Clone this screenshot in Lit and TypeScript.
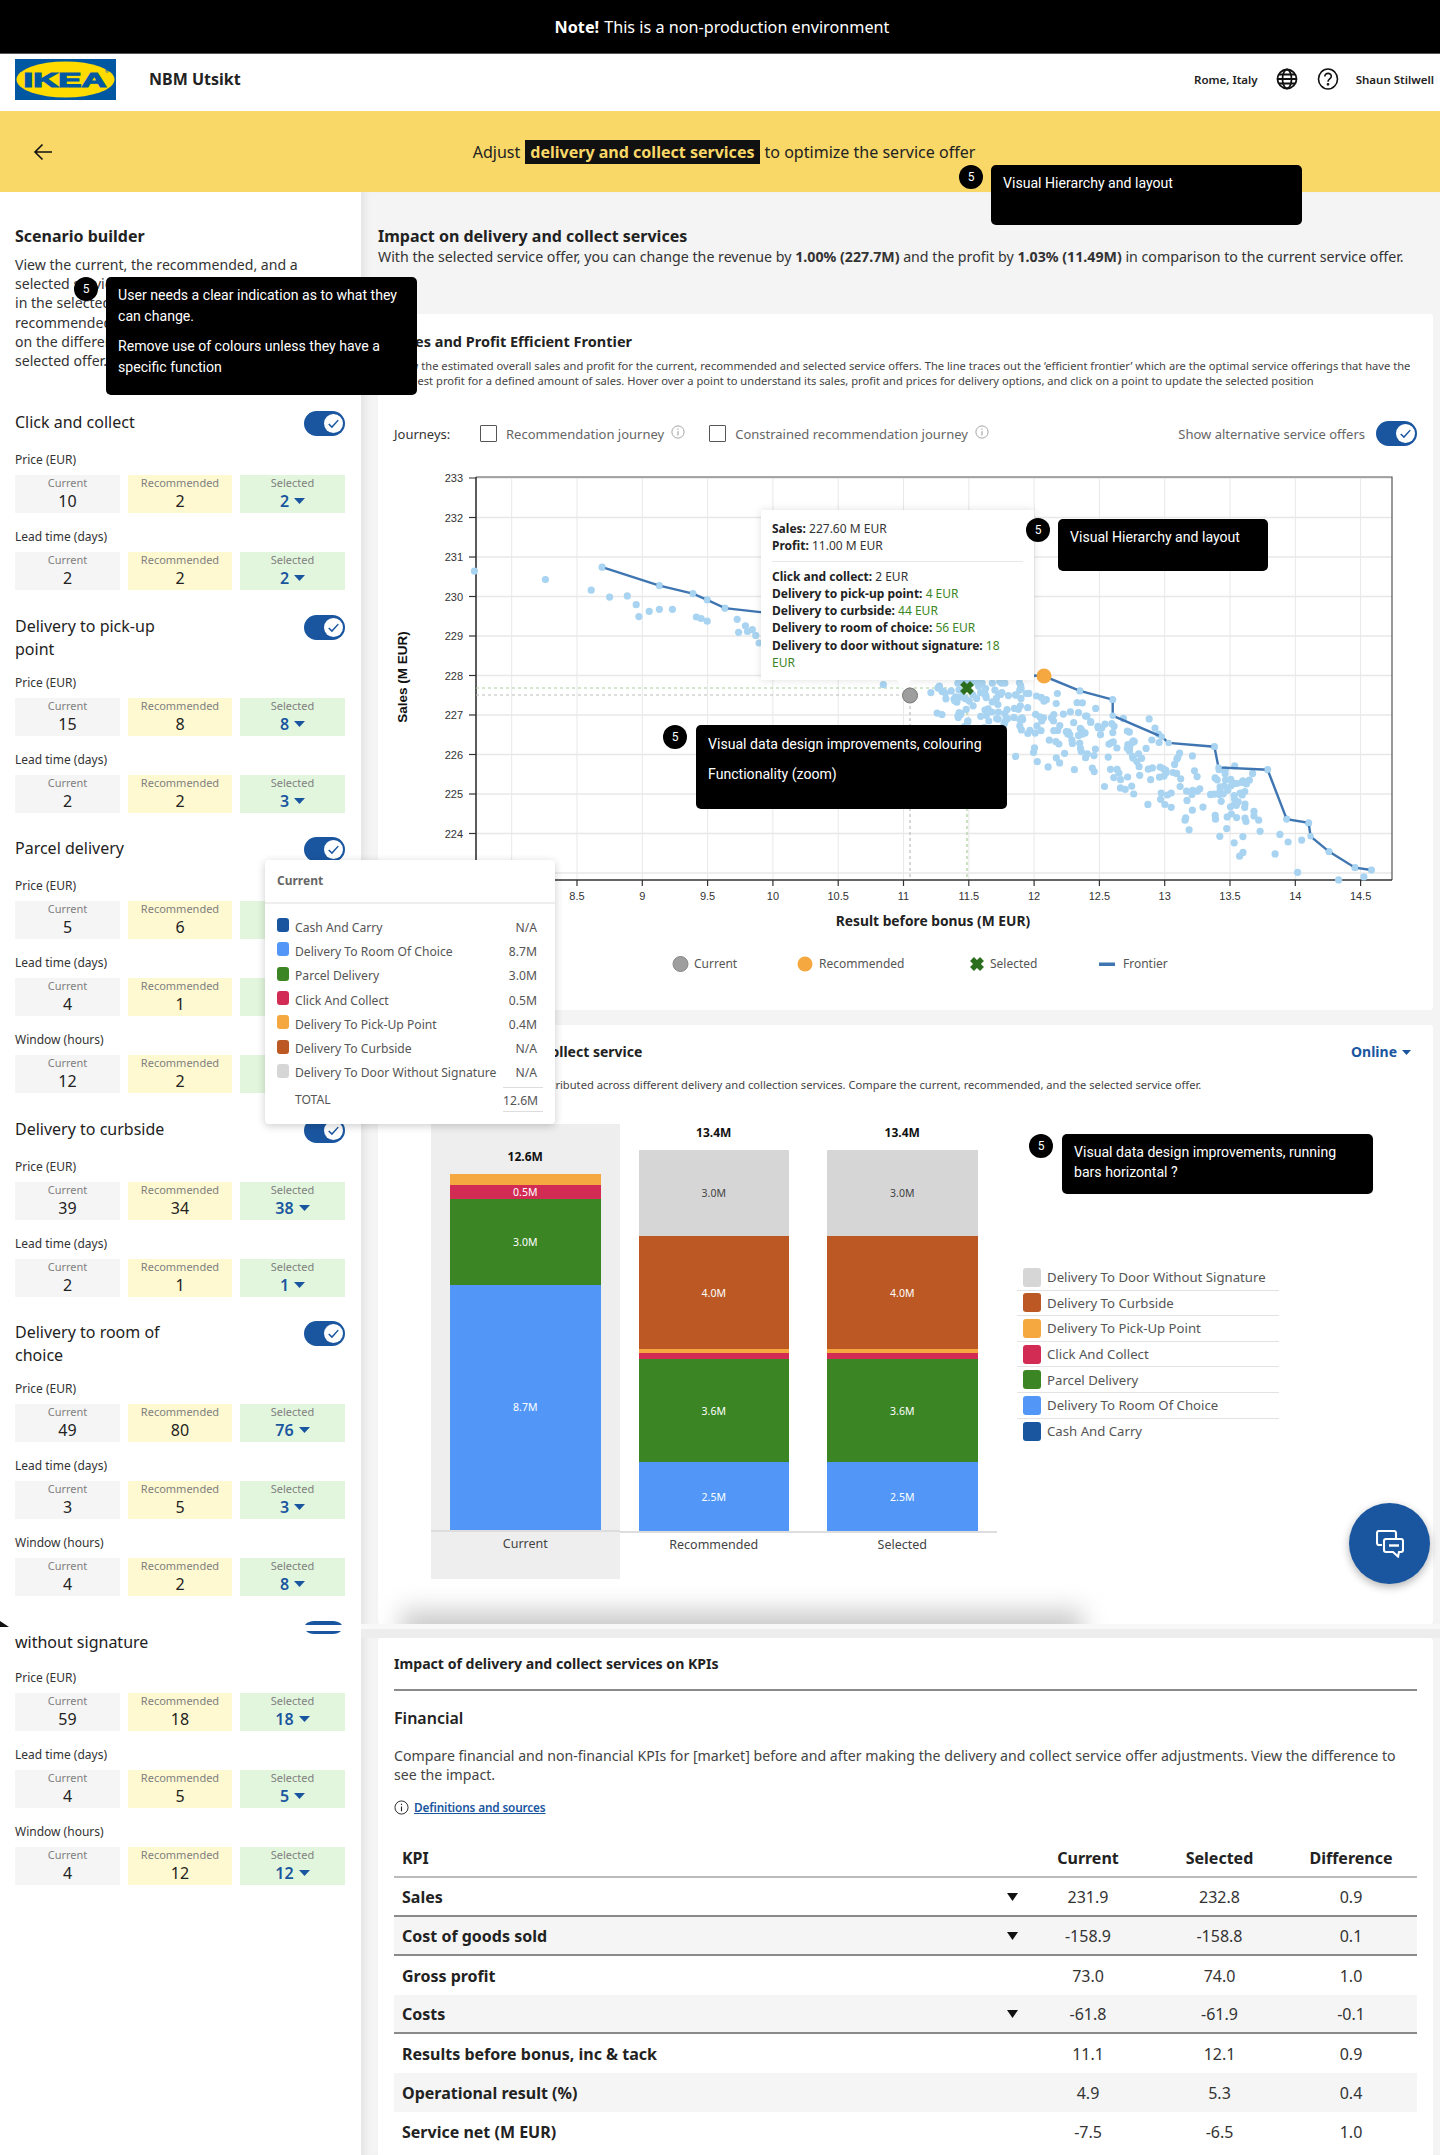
import { LitElement, html, svg, css } from "lit";
import { customElement } from "lit/decorators.js";

const cx = (x: number) => 370 + x / 1.465;
const cy = (y: number) => 400 + y / 2.613;

const FRONTIER: [number, number][] = [
  [340, 437], [424, 485], [473, 506], [494, 522], [520, 544], [575, 555], [700, 640], [800, 700], [988, 722], [1040, 760], [1088, 783],
  [1088, 825], [1160, 880], [1170, 896], [1237, 906], [1243, 960], [1315, 966], [1343, 1095], [1375, 1105], [1378, 1140], [1405, 1180], [1443, 1222], [1467, 1228],
];
const FIXED: [number, number][] = [
  [153, 447], [257, 469], [324, 497], [351, 515], [377, 512], [390, 535], [394, 566], [409, 552], [424, 547], [443, 547], [478, 567], [485, 571], [494, 578],
  [538, 573], [540, 607], [550, 590], [553, 605], [560, 600], [565, 615], [570, 635], [752, 744], [340, 437], [424, 485], [473, 506], [494, 522], [520, 544],
  [1443, 1222], [1467, 1228], [1456, 1246], [1419, 1254], [1359, 1234], [1326, 1186], [1274, 1192], [1279, 1182], [1266, 1157], [1200, 1123], [1195, 1092],
  [1032, 966], [1076, 1010], [972, 921], [831, 818], [838, 822], [1088, 783], [1237, 906], [1315, 966], [1343, 1095], [1375, 1105], [1405, 1180], [1040, 760],
  [1245, 1140], [1255, 1120], [1304, 1127], [1333, 1135], [1345, 1155], [1365, 1150], [1302, 1098], [1295, 1075],
];
function scatter(): [number, number][] {
  let s = 12345;
  const r = () => ((s = (s * 16807) % 2147483647) / 2147483647);
  const out: [number, number][] = [...FIXED];
  for (let i = 0; i < 250; i++) {
    const x = 860 + r() * 440;
    const spread = (r() + r() - 1) * 125;
    const y = 775 + (x - 860) * 0.62 + spread;
    out.push([x, Math.max(740, y)]);
  }
  for (let i = 0; i < 40; i++) out.push([800 + r() * 170, 735 + r() * 55]);
  return out;
}
const DOTS = scatter();

type Group = [string, number, number, number];
const GROUPS: { title: string; rows: Group[] }[] = [
  { title: "Click and collect", rows: [["Price (EUR)", 10, 2, 2], ["Lead time (days)", 2, 2, 2]] },
  { title: "Delivery to pick-up point", rows: [["Price (EUR)", 15, 8, 8], ["Lead time (days)", 2, 2, 3]] },
  { title: "Parcel delivery", rows: [["Price (EUR)", 5, 6, 6], ["Lead time (days)", 4, 1, 1], ["Window (hours)", 12, 2, 2]] },
  { title: "Delivery to curbside", rows: [["Price (EUR)", 39, 34, 38], ["Lead time (days)", 2, 1, 1]] },
  { title: "Delivery to room of choice", rows: [["Price (EUR)", 49, 80, 76], ["Lead time (days)", 3, 5, 3], ["Window (hours)", 4, 2, 8]] },
];
const LAST: Group[] = [["Price (EUR)", 59, 18, 18], ["Lead time (days)", 4, 5, 5], ["Window (hours)", 4, 12, 12]];

const C = { door: "#D6D6D6", curb: "#BC5823", pick: "#F5A83F", click: "#D22C55", parcel: "#3B8524", room: "#5297F7", cash: "#1A56A0" };
const BARS = [
  { total: "12.6M", name: "Current", hi: true, segs: [[C.pick, 11, ""], [C.click, 14, "0.5M"], [C.parcel, 85.5, "3.0M"], [C.room, 245.5, "8.7M"]] },
  { total: "13.4M", name: "Recommended", hi: false, segs: [[C.door, 86, "3.0M"], [C.curb, 113, "4.0M"], [C.pick, 3.5, ""], [C.click, 6.5, ""], [C.parcel, 103, "3.6M"], [C.room, 69, "2.5M"]] },
  { total: "13.4M", name: "Selected", hi: false, segs: [[C.door, 86, "3.0M"], [C.curb, 113, "4.0M"], [C.pick, 3.5, ""], [C.click, 6.5, ""], [C.parcel, 103, "3.6M"], [C.room, 69, "2.5M"]] },
] as { total: string; name: string; hi: boolean; segs: [string, number, string][] }[];

const POP = [
  [C.cash, "Cash And Carry", "N/A"], [C.room, "Delivery To Room Of Choice", "8.7M"], [C.parcel, "Parcel Delivery", "3.0M"], [C.click, "Click And Collect", "0.5M"],
  [C.pick, "Delivery To Pick-Up Point", "0.4M"], [C.curb, "Delivery To Curbside", "N/A"], [C.door, "Delivery To Door Without Signature", "N/A"],
];
const LEG = [
  [C.door, "Delivery To Door Without Signature"], [C.curb, "Delivery To Curbside"], [C.pick, "Delivery To Pick-Up Point"], [C.click, "Click And Collect"],
  [C.parcel, "Parcel Delivery"], [C.room, "Delivery To Room Of Choice"], [C.cash, "Cash And Carry"],
];
const KPI: [string, boolean, string, string, string, string][] = [
  ["Sales", true, "231.9", "232.8", "0.9", "hard"],
  ["Cost of goods sold", true, "-158.9", "-158.8", "0.1", "alt hard"],
  ["Gross profit", false, "73.0", "74.0", "1.0", ""],
  ["Costs", true, "-61.8", "-61.9", "-0.1", "alt hard"],
  ["Results before bonus, inc & tack", false, "11.1", "12.1", "0.9", ""],
  ["Operational result (%)", false, "4.9", "5.3", "0.4", "alt"],
  ["Service net (M EUR)", false, "-7.5", "-6.5", "1.0", ""],
];

const X_TICKS = [8.5, 9, 9.5, 10, 10.5, 11, 11.5, 12, 12.5, 13, 13.5, 14, 14.5];
const Y_TICKS = [233, 232, 231, 230, 229, 228, 227, 226, 225, 224];
const xp = (v: number) => 577 + (v - 8.5) * 130.6;
const yp = (v: number) => 478 + (233 - v) * 39.5;

const info = html`<svg class="info" viewBox="0 0 16 16"><circle cx="8" cy="8" r="7" fill="none" stroke="currentColor" stroke-width="1"/><path d="M8 7v5M8 4v1.4" stroke="currentColor" stroke-width="1.2" fill="none"/></svg>`;
const caret = html`<svg class="caret" viewBox="0 0 11 6"><path d="M0 0h11L5.500 6z" fill="#1A56A0"/></svg>`;
const toggle = html`<span class="toggle"><span class="knob"><svg viewBox="0 0 18 18"><path d="M4.500 9.400l3 3 6-6.600" fill="none" stroke="#1A56A0" stroke-width="1.4"/></svg></span></span>`;
const xMark = (x: number, y: number, c: string) => svg`<path transform="translate(${x} ${y})" stroke="${c}" stroke-width="5.5" fill="none" d="M-5-5L5 5M5-5L-5 5"/>`;

@customElement("app-root")
export class AppRoot extends LitElement {
  static styles = css`
    :host { display: block; position: relative; width: 1440px; height: 2155px; overflow: hidden; background: #fff; font-family: "Noto Sans", sans-serif; color: #111; }
    .note { height: 54px; background: #000; color: #fff; border-bottom: 1px solid #555; box-sizing: border-box; display: flex; align-items: center; justify-content: center; font-size: 16.2px; padding-left: 4px; }
    .note b { font-weight: 700; margin-right: 5px; }
    header { height: 57px; box-sizing: border-box; display: flex; align-items: center; padding: 0 6px 7px 15px; font-size: 11.5px; font-weight: 600; color: #222; }
    .logo { width: 101px; height: 41px; }
    .app { font-size: 16px; font-weight: 700; margin-left: 33px; flex: 1; }
    .hicon { width: 22px; height: 22px; margin-left: 18px; }
    .hicon.q { margin-left: 19px; }
    .user { margin-left: 17px; }
    .banner { height: 81px; background: #F9D867; position: relative; display: flex; align-items: center; justify-content: center; font-size: 16.05px; padding-left: 8px; color: #222; }
    .banner svg { position: absolute; left: 33px; top: 31px; width: 20px; height: 20px; }
    .banner mark { background: #111; color: #F9D867; font-weight: 700; padding: 1px 5px; margin: 0 5px; }
    .body { display: grid; grid-template-columns: 361px minmax(0, 1fr); }
    aside { padding: 33px 16px 0 15px; height: 1963px; box-sizing: border-box; }
    h2 { margin: 0; font-size: 16px; font-weight: 700; line-height: 22px; color: #222; }
    .intro { margin: 8px 0 41px; font-size: 14.1px; line-height: 19.2px; color: #333; white-space: nowrap; }
    section { margin-bottom: 24.25px; }
    .head { display: flex; justify-content: space-between; align-items: flex-start; min-height: 27px; margin-bottom: 14.25px; }
    .head span.t { max-width: 170px; font-size: 16px; line-height: 23px; color: #222; }
    .toggle { width: 41px; height: 25px; border-radius: 13px; background: #1A56A0; position: relative; display: block; flex: none; }
    .knob { position: absolute; right: 2px; top: 3px; width: 19px; height: 19px; border-radius: 50%; background: #fff; }
    .knob svg { display: block; width: 19px; height: 19px; }
    .lab { font-size: 12px; line-height: 16px; margin-bottom: 7px; color: #333; }
    .boxes { display: grid; grid-template-columns: 105px 104.5px 105px; column-gap: 7.75px; margin-bottom: 16px; }
    .rows .boxes:last-child { margin-bottom: 0; }
    .box { height: 38px; text-align: center; background: #F5F5F5; }
    .box.r { background: #FFF9D1; }
    .box.s { background: #E2F6DD; }
    .box small { display: block; font-size: 11px; line-height: 16px; color: #808080; }
    .box strong { display: flex; align-items: center; justify-content: center; gap: 5px; font-size: 16px; line-height: 20px; font-weight: 400; color: #222; }
    .box.s strong { color: #1A56A0; font-weight: 600; }
    .caret { width: 11px; height: 6px; }
    .stitch { height: 13px; margin-top: 3px; position: relative; }
    .sliver { position: absolute; right: 3px; top: 0; width: 37px; height: 13px; }
    .blob { position: absolute; left: -15px; top: 0; width: 9px; height: 6px; }
    .lastt { font-size: 16px; line-height: 23px; height: 23px; margin-bottom: 16px; color: #222; margin-top: -3px; }
    main { background: #F4F4F4; padding: 33px 7px 0 17px; box-shadow: inset 8px 0 6px -4px #e4e4e4; height: 1963px; box-sizing: border-box; min-width: 0; }
    .sub { margin: 0 0 47px; font-size: 14.2px; line-height: 20px; color: #333; white-space: nowrap; }
    .sub b { font-weight: 700; }
    .card { background: #fff; border-radius: 3px; padding: 17px 16px 0; box-sizing: border-box; position: relative; overflow: hidden; }
    .c1 { height: 696px; margin-bottom: 15px; }
    .c2 { height: 599px; }
    .c3 { height: 560px; padding-top: 16px; }
    h3 { margin: 0; font-size: 14px; font-weight: 700; line-height: 20px; color: #222; }
    .c1 h3 { font-size: 14.5px; }
    .c3 h3 { font-size: 14.1px; }
    .desc { margin: 7px 0 0; font-size: 11.15px; line-height: 15px; color: #444; white-space: nowrap; }
    .jr { display: flex; align-items: center; height: 25px; margin: 33px 0 3.5px; font-size: 13px; color: #666; }
    .jr .first { color: #333; width: 86px; }
    .cb { width: 17px; height: 17px; border: 1.5px solid #555; box-sizing: border-box; border-radius: 1px; margin-right: 9px; }
    .info { width: 14px; height: 14px; margin: -4px 0 0 7px; color: #999; }
    .jr .gap { width: 24px; }
    .jr .push { flex: 1; }
    .jr .toggle { margin: 0 0 0 11px; }
    .chart { display: block; margin-left: -16px; }
    .chart text { font-family: "Liberation Sans", sans-serif; }
    .chart text.n { font-family: "Noto Sans", sans-serif; }
    .c2head { display: flex; justify-content: space-between; padding-right: 2px; }
    .online { color: #1A56A0; font-weight: 700; font-size: 14px; line-height: 20px; display: flex; align-items: center; gap: 5px; margin-right: 4px; }
    .online .caret { width: 9px; height: 5px; }
    .d2 { margin-top: 14px; line-height: 18px; }
    .barwrap { display: flex; margin: 30px 0 0 37px; }
    .cols { display: flex; height: 455px; width: 566px; flex: none; }
    .col { width: 188.5px; display: flex; flex-direction: column; justify-content: flex-end; align-items: stretch; }
    .col.hi { background: #EEEEEE; }
    .tot { text-align: center; font-size: 12px; font-weight: 700; line-height: 18px; margin-bottom: 8px; color: #111; }
    .stack { margin: 0 19px 0 19px; }
    .seg { display: flex; align-items: center; justify-content: center; font-size: 10.5px; color: #fff; }
    .seg.dk { color: #444; }
    .ax { height: 49px; border-top: 2px solid #DDD; box-sizing: border-box; text-align: center; font-size: 12.5px; line-height: 24px; color: #444; }
    .legend { margin: 141px 0 0 20px; width: 262px; }
    .legend div { height: 25.6px; box-sizing: border-box; display: flex; align-items: center; gap: 6px; padding-left: 6px; font-size: 13.2px; color: #555; border-bottom: 1.5px solid #E3E3E3; }
    .legend div:last-child { border-bottom: 0; }
    .legend i { width: 18px; height: 19px; border-radius: 3px; }
    .blur { position: absolute; left: 23px; top: 585px; width: 682px; height: 40px; background: #ccc; filter: blur(12px); }
    .seam { height: 14px; background: #EDEDED; border-top: 5px solid #F8F8F8; box-sizing: border-box; margin-left: -17px; margin-right: -7px; }
    .rule { border: 0; border-top: 2px solid #8a8a8a; margin: 15px 0 16px; }
    .fin { font-size: 16px; font-weight: 600; line-height: 22px; color: #222; }
    .p3 { margin: 17px 0 0; font-size: 14.15px; line-height: 19.2px; color: #444; }
    .link { display: flex; align-items: center; margin-top: 14px; font-size: 11.8px; font-weight: 600; color: #1A56A0; height: 18px; letter-spacing: -.15px; }
    .link u { margin-left: 5px; }
    .link .info { margin: 1px 0 0 0; color: #222; width: 15px; height: 15px; }
    .tbl { margin-top: 23px; }
    .tr { display: grid; grid-template-columns: 605px 15px 132px 131px 132px; padding-left: 8px; align-items: center; text-align: center; height: 39px; box-sizing: border-box; font-size: 16px; color: #333; }
    .tr.th { height: 39px; font-weight: 700; border-bottom: 2px solid #bbb; color: #222; }
    .tr.alt { background: #F5F5F5; }
    .tr.hard { border-bottom: 2px solid #8a8a8a; }
    .tr > :first-child { text-align: left; font-weight: 700; color: #222; }
    .ar { width: 11px; height: 8px; display: block; }

    .note5 { position: absolute; background: #000; color: #fff; border-radius: 5px; font-family: Roboto, sans-serif; font-size: 14.1px; box-sizing: border-box; padding-left: 12px; z-index: 5; }
    .note5 p { margin: 0; }
    .dot { position: absolute; width: 24px; height: 24px; border-radius: 50%; background: #000; color: #fff; font-size: 12px; font-family: Roboto, sans-serif; display: flex; align-items: center; justify-content: center; z-index: 6; }
    .n1 { left: 106px; top: 277px; width: 311px; height: 118px; padding-top: 8px; line-height: 20.5px; }
    .n1 p + p { margin-top: 10px; }
    .d1 { left: 74px; top: 277px; }
    .n2 { left: 991px; top: 165px; width: 311px; height: 60px; padding-top: 8px; line-height: 20px; }
    .d2b { left: 959px; top: 165px; }
    .n3 { left: 1058px; top: 519px; width: 210px; height: 52px; padding-top: 8px; line-height: 20px; }
    .d3 { left: 1026px; top: 518px; }
    .n4 { left: 696px; top: 725px; width: 311px; height: 84px; padding-top: 9px; line-height: 20px; }
    .n4 p + p { margin-top: 10px; }
    .d4 { left: 663px; top: 725px; }
    .n5 { left: 1062px; top: 1134px; width: 311px; height: 60px; padding-top: 8px; line-height: 20px; }
    .d5 { left: 1029px; top: 1134px; }

    .tip { position: absolute; left: 761px; top: 510px; width: 273px; height: 170px; box-sizing: border-box; background: #fff; padding: 10px 11px; font-size: 12px; line-height: 17.3px; color: #333; box-shadow: 0 0 8px rgba(0,0,0,.12); z-index: 3; }
    .tip b { font-weight: 700; color: #222; }
    .tip hr { border: 0; border-top: 1.5px solid #e8e8e8; margin: 6px 0 6px; }
    .tip em { font-style: normal; color: #3B8524; }
    .tip::after { content: ""; position: absolute; left: 136px; bottom: -10px; border: 7px solid transparent; border-top-color: #fff; border-bottom: 0; border-top-width: 10px; }
    .pop { position: absolute; left: 265px; top: 860px; width: 290px; height: 264px; box-sizing: border-box; background: #fff; border-radius: 4px; box-shadow: 0 2px 8px rgba(0,0,0,.2); z-index: 4; font-size: 12.15px; color: #555; }
    .pop h4 { margin: 0; height: 42px; line-height: 42px; padding-left: 12px; font-size: 12px; font-weight: 700; color: #666; border-bottom: 2px solid #eee; box-sizing: content-box; }
    .pop .list { padding: 11px 18px 0 12px; }
    .pop .row { display: flex; align-items: center; height: 24.3px; }
    .pop .row i { width: 12px; height: 14px; border-radius: 3px; margin-right: 6px; margin-top: -4px; }
    .pop .row span { flex: 1; }
    .pop .tot2 { display: flex; justify-content: space-between; height: 25px; line-height: 25px; padding-left: 18px; margin-top: 2px; position: relative; }
    .pop .tot2 span:last-child { border-top: 1px solid #ddd; border-bottom: 1px solid #ddd; text-align: right; margin-right: -6px; padding-right: 6px; box-sizing: content-box; width: 34px; }
    .fab { position: absolute; left: 1349px; top: 1503px; width: 81px; height: 81px; border-radius: 50%; background: #1A56A0; box-shadow: 0 3px 8px rgba(0,0,0,.3); display: flex; align-items: center; justify-content: center; z-index: 6; }
    .fab svg { width: 28px; height: 28px; }
  `;

  private boxes(rows: Group[]) {
    return html`<div class="rows">${rows.map(
      ([l, a, b, c]) => html`<div class="lab">${l}</div>
        <div class="boxes">
          <div class="box"><small>Current</small><strong>${a}</strong></div>
          <div class="box r"><small>Recommended</small><strong>${b}</strong></div>
          <div class="box s"><small>Selected</small><strong>${c}${caret}</strong></div>
        </div>`
    )}</div>`;
  }

  private chart() {
    const line = FRONTIER.map(([x, y]) => `${cx(x).toFixed(1)},${cy(y).toFixed(1)}`).join(" ");
    return html`<svg class="chart" width="1055" height="540" viewBox="378 450 1055 540">
      ${[8, ...X_TICKS].map((v) => svg`<line x1=${xp(v)} x2=${xp(v)} y1="478" y2="880" stroke="#E8E8E8" stroke-width="1"/>`)}
      ${[...Y_TICKS, 223].map((v) => svg`<line x1="476" x2="1392" y1=${yp(v)} y2=${yp(v)} stroke="#E8E8E8" stroke-width="1.5"/>`)}
      <path d="M476 477H1392V880" fill="none" stroke="#555" stroke-width="1.2"/>
      <path d="M476 477V880H1392" fill="none" stroke="#333" stroke-width="1.6"/>
      ${Y_TICKS.map((v) => svg`<line x1="469" x2="476" y1=${yp(v)} y2=${yp(v)} stroke="#333" stroke-width="1.2"/><text x="463" y=${yp(v) + 4} text-anchor="end" font-size="11" fill="#333">${v}</text>`)}
      ${X_TICKS.map((v) => svg`<line x1=${xp(v)} x2=${xp(v)} y1="880" y2="886" stroke="#333" stroke-width="1.2"/><text x=${xp(v)} y="900" text-anchor="middle" font-size="11" fill="#333">${v}</text>`)}
      <text transform="translate(407 677) rotate(-90)" text-anchor="middle" font-size="13.5" font-weight="700" fill="#111">Sales (M EUR)</text>
      <text class="n" x="933" y="926" text-anchor="middle" font-size="13.8" font-weight="700" fill="#222">Result before bonus (M EUR)</text>
      <path d="M476 695H905M910 700V880" stroke="#bbb" stroke-width="1.2" stroke-dasharray="3 3" fill="none"/>
      <path d="M476 688H960M967 694V880" stroke="#A8CF9B" stroke-width="1.2" stroke-dasharray="3 3" fill="none"/>
      ${DOTS.map(([x, y]) => svg`<circle cx=${cx(x).toFixed(1)} cy=${cy(y).toFixed(1)} r="3.6" fill="#A9D4F1"/>`)}
      <polyline points=${line} fill="none" stroke="#3F76B2" stroke-width="2.4"/>
      ${FRONTIER.filter((_, i) => i !== 5 && i !== 6 && i !== 7 && i !== 8).map(([x, y]) => svg`<circle cx=${cx(x).toFixed(1)} cy=${cy(y).toFixed(1)} r="3.2" fill="#A9D4F1"/>`)}
      <circle cx="910" cy="695.500" r="7.500" fill="#9E9E9E" stroke="#777" stroke-width="1"/>
      <circle cx="1044" cy="676" r="7.500" fill="#F5A83F"/>
      ${xMark(967, 688, "#2B6E1E")}
      <circle cx="680.500" cy="964" r="7.500" fill="#9E9E9E" stroke="#888"/>
      <text class="n" x="694" y="968" font-size="12" fill="#555">Current</text>
      <circle cx="805" cy="964" r="7.500" fill="#F5A83F"/>
      <text class="n" x="819" y="968" font-size="12" fill="#555">Recommended</text>
      ${xMark(977, 964, "#2B6E1E")}
      <text class="n" x="990" y="968" font-size="12" fill="#555">Selected</text>
      <rect x="1099" y="962.500" width="16" height="3.500" fill="#3F76B2"/>
      <text class="n" x="1123" y="968" font-size="12" fill="#555">Frontier</text>
    </svg>`;
  }

  render() {
    return html`
      <div class="note"><b>Note!</b> This is a non-production environment</div>
      <header>
        <svg class="logo" viewBox="0 0 101 41">
          <rect width="101" height="41" fill="#0058A3"/>
          <ellipse cx="50.500" cy="20.500" ry="18" rx="49" fill="#FFDB00"/>
          <text x="50" y="28" text-anchor="middle" font-family="Liberation Sans" font-weight="700" font-size="21" textLength="83" lengthAdjust="spacingAndGlyphs" stroke="#0058A3" stroke-width="1.2" fill="#0058A3">IKEA</text>
          <text x="90" y="14" font-family="Liberation Sans" font-size="5" fill="#0058A3">®</text>
        </svg>
        <span class="app">NBM Utsikt</span>
        <span>Rome, Italy</span>
        <svg class="hicon" viewBox="0 0 22 22" fill="none" stroke="#111" stroke-width="1.8"><circle cx="11" cy="11" r="9.500"/><ellipse cx="11" cy="11" rx="4.500" ry="9.500"/><path d="M1.500 11h19M3 6.500h16M3 15.500h16"/></svg>
        <svg class="hicon q" viewBox="0 0 22 22" fill="none" stroke="#111" stroke-width="1.6"><ellipse cx="11" cy="11" rx="9.500" ry="10"/><path d="M7.800 8.500c0-4.300 6.600-4 6.500-.2 0 2.600-3.300 2.600-3.300 5.400"/><circle cx="11" cy="16.300" r=".6"/></svg>
        <span class="user">Shaun Stilwell</span>
      </header>
      <div class="banner">
        <svg viewBox="0 0 20 20" fill="none" stroke="#111" stroke-width="1.6"><path d="M19 10H2M9.500 2.500L2 10l7.500 7.500"/></svg>
        Adjust <mark>delivery and collect services</mark> to optimize the service offer
      </div>
      <div class="body">
        <aside>
          <h2>Scenario builder</h2>
          <p class="intro">View the current, the recommended, and a<br />selected service offer. Adjust the values<br />in the selected column and compare to the<br />recommended offer to see the impact<br />on the different services for your<br />selected offer.</p>
          ${GROUPS.map((g) => html`<section>
            <div class="head"><span class="t">${g.title}</span>${toggle}</div>
            ${this.boxes(g.rows)}
          </section>`)}
          <div class="stitch">
            <svg class="blob" viewBox="0 0 9 6"><path d="M0 0l9 6H0z" fill="#111"/></svg>
            <svg class="sliver" viewBox="0 0 37 13"><path d="M0 4C2 1 6 0 9 0h19c3 0 7 1 9 4z" fill="#1A56A0"/><path d="M1 10h35c-2 2-5 3-8 3H9c-3 0-6-1-8-3z" fill="#1A56A0"/></svg>
          </div>
          <div class="lastt">without signature</div>
          ${this.boxes(LAST)}
        </aside>
        <main>
          <h2>Impact on delivery and collect services</h2>
          <p class="sub">With the selected service offer, you can change the revenue by <b>1.00% (227.7M)</b> and the profit by <b>1.03% (11.49M)</b> in comparison to the current service offer.</p>
          <div class="card c1">
            <h3>Sales and Profit Efficient Frontier</h3>
            <p class="desc">View the estimated overall sales and profit for the current, recommended and selected service offers. The line traces out the ‘efficient frontier’ which are the optimal service offerings that have the<br />highest profit for a defined amount of sales. Hover over a point to understand its sales, profit and prices for delivery options, and click on a point to update the selected position</p>
            <div class="jr">
              <span class="first">Journeys:</span><span class="cb"></span>Recommendation journey ${info}<span class="gap"></span>
              <span class="cb"></span>Constrained recommendation journey ${info}<span class="push"></span>
              Show alternative service offers ${toggle}
            </div>
            ${this.chart()}
          </div>
          <div class="card c2">
            <div class="c2head"><h3>Sales by delivery and collect service</h3><span class="online">Online ${caret}</span></div>
            <p class="desc d2">See how the total sales are distributed across different delivery and collection services. Compare the current, recommended, and the selected service offer.</p>
            <div class="barwrap">
              <div class="cols">
                ${BARS.map((b) => html`<div class="col ${b.hi ? "hi" : ""}">
                  <div class="tot">${b.total}</div>
                  <div class="stack">${b.segs.map(([c, h, t]) => html`<div class="seg ${c === C.door ? "dk" : ""}" style="background:${c};height:${h}px">${t}</div>`)}</div>
                  <div class="ax">${b.name}</div>
                </div>`)}
              </div>
              <div class="legend">${LEG.map(([c, t]) => html`<div><i style="background:${c}"></i>${t}</div>`)}</div>
            </div>
            <div class="blur"></div>
          </div>
          <div class="seam"></div>
          <div class="card c3">
            <h3>Impact of delivery and collect services on KPIs</h3>
            <hr class="rule" />
            <div class="fin">Financial</div>
            <p class="p3">Compare financial and non-financial KPIs for [market] before and after making the delivery and collect service offer adjustments. View the difference to see the impact.</p>
            <div class="link">${info}<u>Definitions and sources</u></div>
            <div class="tbl">
              <div class="tr th"><span>KPI</span><span></span><span>Current</span><span>Selected</span><span>Difference</span></div>
              ${KPI.map(([n, ar, a, b, c, k]) => html`<div class="tr ${k}"><span>${n}</span><span>${ar ? html`<svg class="ar" viewBox="0 0 11 8"><path d="M0 0h11L5.500 8z" fill="#111"/></svg>` : ""}</span><span>${a}</span><span>${b}</span><span>${c}</span></div>`)}
            </div>
          </div>
        </main>
      </div>

      <div class="tip">
        <b>Sales:</b> 227.60 M EUR<br /><b>Profit:</b> 11.00 M EUR
        <hr />
        <b>Click and collect:</b> 2 EUR<br />
        <b>Delivery to pick-up point:</b> <em>4 EUR</em><br />
        <b>Delivery to curbside:</b> <em>44 EUR</em><br />
        <b>Delivery to room of choice:</b> <em>56 EUR</em><br />
        <b>Delivery to door without signature:</b> <em>18<br />EUR</em>
      </div>
      <div class="pop">
        <h4>Current</h4>
        <div class="list">
          ${POP.map(([c, t, v]) => html`<div class="row"><i style="background:${c}"></i><span>${t}</span>${v}</div>`)}
          <div class="tot2"><span>TOTAL</span><span>12.6M</span></div>
        </div>
      </div>

      <div class="dot d1">5</div>
      <div class="note5 n1"><p>User needs a clear indication as to what they can change.</p><p>Remove use of colours unless they have a specific function</p></div>
      <div class="dot d2b">5</div>
      <div class="note5 n2"><p>Visual Hierarchy and layout</p></div>
      <div class="dot d3">5</div>
      <div class="note5 n3"><p>Visual Hierarchy and layout</p></div>
      <div class="dot d4">5</div>
      <div class="note5 n4"><p>Visual data design improvements, colouring</p><p>Functionality (zoom)</p></div>
      <div class="dot d5">5</div>
      <div class="note5 n5"><p>Visual data design improvements, running<br />bars horizontal ?</p></div>
      <div class="fab"><svg viewBox="0 0 28 28" fill="none" stroke="#fff" stroke-width="2.1"><path d="M6 15H3a2 2 0 0 1-2-2V3a2 2 0 0 1 2-2h15a2 2 0 0 1 2 2v5"/><path d="M10 9h15a2 2 0 0 1 2 2v9a2 2 0 0 1-2 2h-2l-1 4.500-5-4.500h-7a2 2 0 0 1-2-2v-9a2 2 0 0 1 2-2z"/><path d="M13 15.500h10" stroke-width="2.400"/></svg></div>
    `;
  }
}
